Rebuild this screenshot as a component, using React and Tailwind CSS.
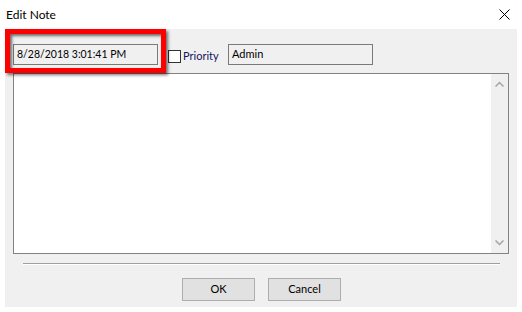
import React from 'react';

function Field({ value, className }) {
  return (
    <div className={`h-[21px] w-[145px] border border-[#7a7a7a] bg-[#f0f0f0] flex items-center pl-[3px] text-black ${className || ''}`}>
      {value}
    </div>
  );
}

function Button({ label }) {
  return (
    <button className="w-[73px] h-[23px] bg-[#e1e1e1] border border-[#adadad] text-black flex items-center justify-center">
      {label}
    </button>
  );
}

export default function App() {
  return (
    <div
      className="relative w-[522px] h-[312px] bg-white overflow-hidden text-[11px]"
      style={{ fontFamily: 'Lato, "Noto Sans", sans-serif' }}
    >
      <div className="h-[29px] flex items-center justify-between pl-[6px] pr-[12px] text-[12px]">
        <span className="text-black">Edit Note</span>
        <svg width="11" height="11" viewBox="0 0 11 11">
          <path d="M0.5 0.5 L10.5 10.5 M10.5 0.5 L0.5 10.5" stroke="#000" strokeWidth="1" fill="none" />
        </svg>
      </div>

      <div className="mx-[5px] h-[278px] bg-[#f0f0f0] px-[8px] pt-[15px]">
        <div className="flex items-center h-[21px]">
          <Field value="8/28/2018 3:01:41 PM" className="text-[10.5px]" />
          <div className="ml-[10px] w-[60px] flex items-center mt-[3px]">
            <div className="w-[13px] h-[13px] border border-[#333] bg-white" />
            <span className="ml-[2px] mt-[1px] text-[#14145e]">Priority</span>
          </div>
          <Field value="Admin" />
        </div>

        <div className="mt-[8px] h-[181px] w-[496px] border border-[#828282] bg-white flex justify-end">
          <div className="w-[17px] h-full bg-[#f0f0f0] flex flex-col items-center justify-between py-[7px]">
            <svg width="9" height="6" viewBox="0 0 9 6">
              <path d="M0.5 5.5 L4.5 1.5 L8.5 5.5" stroke="#a3a3a3" strokeWidth="1.5" fill="none" />
            </svg>
            <svg width="9" height="6" viewBox="0 0 9 6">
              <path d="M0.5 0.5 L4.5 4.5 L8.5 0.5" stroke="#a3a3a3" strokeWidth="1.5" fill="none" />
            </svg>
          </div>
        </div>

        <div className="mt-[9px] ml-[10px] w-[477px] h-[1px] bg-[#a0a0a0] border-b border-white box-content" />

        <div className="mt-[13px] flex justify-center gap-[13px] pl-[1px]">
          <Button label="OK" />
          <Button label="Cancel" />
        </div>
      </div>

      <div className="absolute left-[5px] top-[29px] w-[161px] h-[44px] border-[5px] border-[#ff0000] shadow-[2px_2px_3px_rgba(0,0,0,0.55),inset_2px_2px_3px_rgba(0,0,0,0.55)]" />
    </div>
  );
}
